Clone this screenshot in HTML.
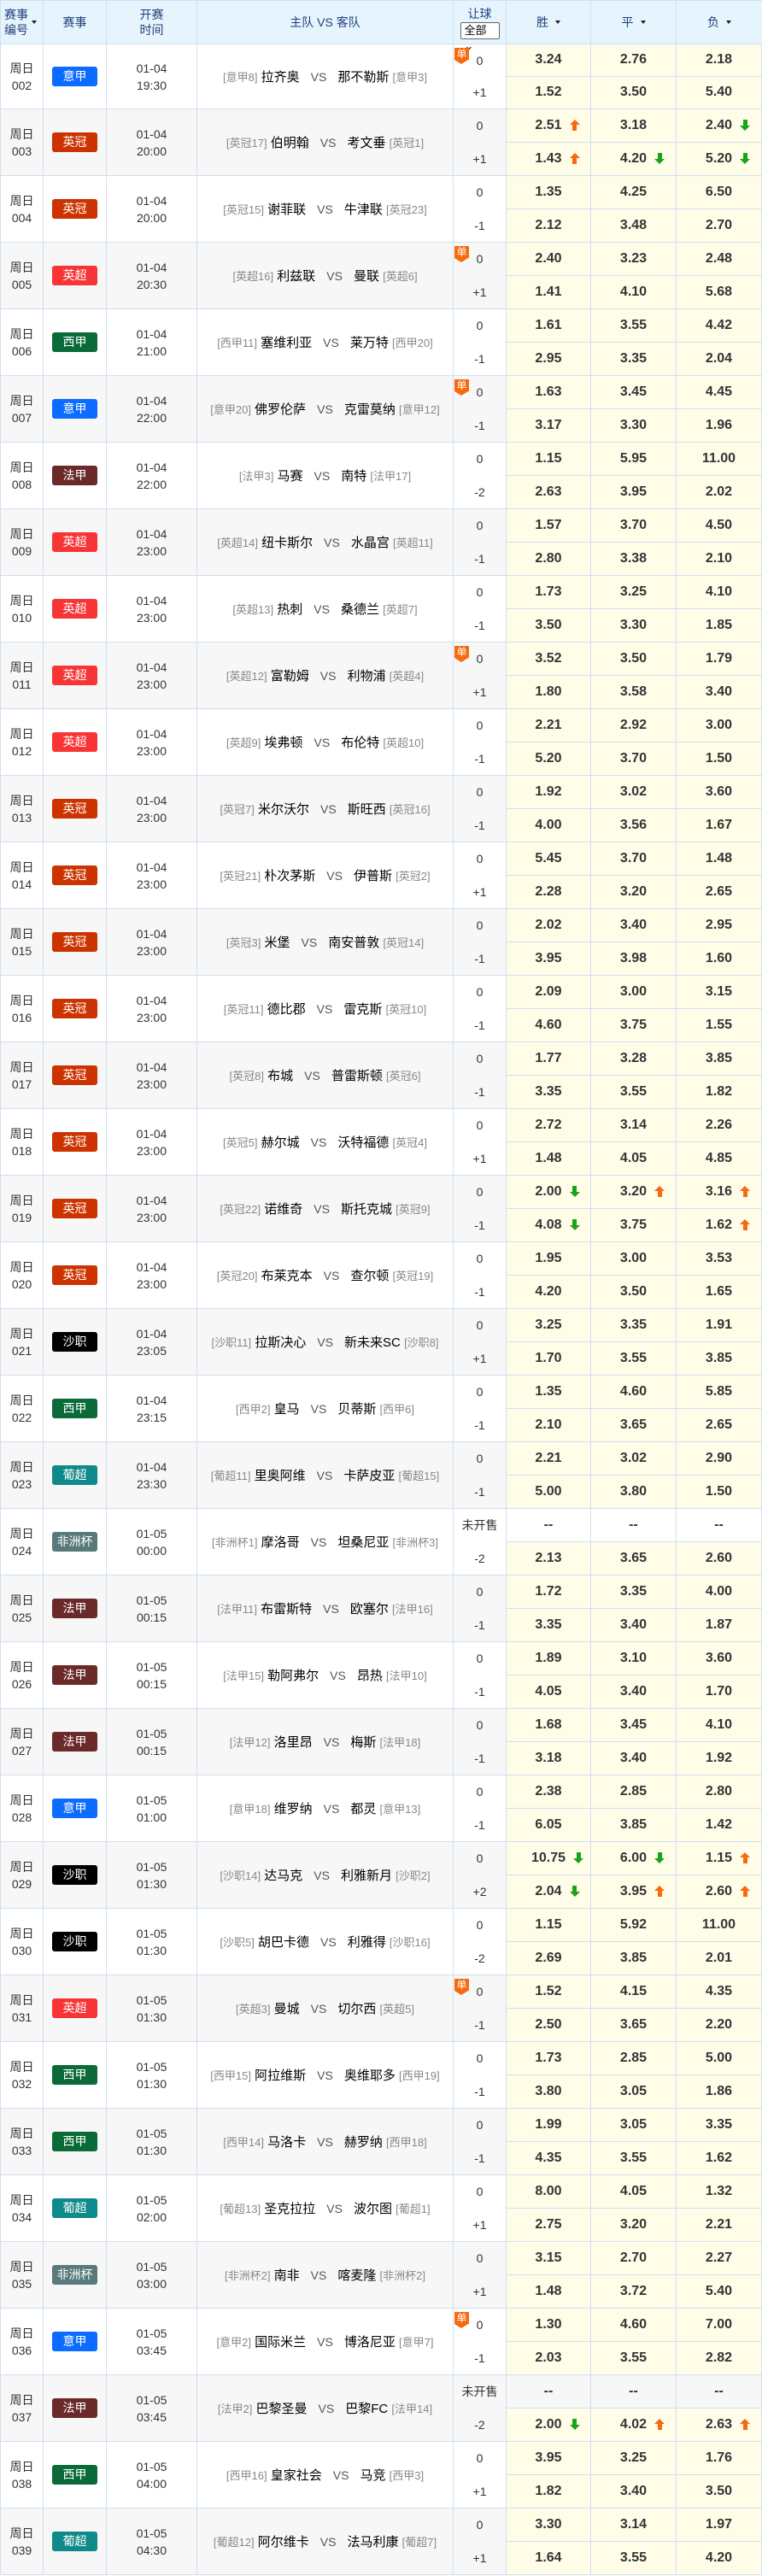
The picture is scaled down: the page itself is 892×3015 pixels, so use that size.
<!DOCTYPE html>
<html><head><meta charset="utf-8">
<style>
*{margin:0;padding:0;box-sizing:border-box}
body{width:892px;height:3015px;background:#fff;font-family:"Liberation Sans","Noto Sans CJK SC",sans-serif;color:#333;overflow:hidden}
.w{border-left:1px solid #cfe0f0;border-top:1px solid #cfe0f0;width:892px}
.hd,.m{display:flex;border-bottom:1px solid #cfe0f0}
.hd{height:51px;background:#e6f4fe;color:#1f3f78;font-size:14px}
.hd>div{border-right:1px solid #cfe0f0;display:flex;align-items:center;justify-content:center;text-align:center;line-height:18px;position:relative}
.car{display:inline-block;width:0;height:0;border-left:3.5px solid transparent;border-right:3.5px solid transparent;border-top:4px solid #222;margin-left:8px;vertical-align:middle}
.sel{display:inline-block;border:1px solid #666;border-radius:2px;background:#fff;color:#000;font-size:13px;width:46px;height:20px;line-height:18px;text-align:left;padding-left:4px;margin-top:1px}
.m{height:78px}
.m.f{height:76px}
.g{background:#f7f7f7}
.a,.b,.t,.v,.h{border-right:1px solid #cfe0f0;display:flex;align-items:center;justify-content:center;text-align:center}
.c1,.a{width:50px}.c2,.b{width:74px}.c3,.t{width:106px}.c4,.v{width:300px}.c5,.h{width:62px}
.co{width:100px}.co3{width:99px}
.a,.t{font-size:14px;line-height:20px;color:#333}
.b i{font-style:normal;display:block;width:53px;height:23px;line-height:23px;border-radius:3px;color:#fff;font-size:14px}
.yj{background:#0b6cff}.yg{background:#cc3300}.yc{background:#f83536}.xj{background:#0a6b38}.fj{background:#6b2a2a}.sz{background:#000}.fz{background:#587a7a}.pc{background:#0f8a8a}
.v{font-size:15px;color:#000;white-space:nowrap}
.v em{font-style:normal;color:#888;font-size:13px}
.v small{font-size:14px;color:#555;margin:0 13px}
.h{flex-direction:column;position:relative;font-size:14px;color:#333}
.h p{flex:1;display:flex;align-items:center;justify-content:center;width:100%}
.dan{position:absolute;left:1px;top:4px;width:17px;height:14px;background:#f86a0d;color:#fff;font-size:12px;line-height:14px;text-align:center}
.dan:after{content:"";position:absolute;left:0;top:14px;border-left:8.5px solid transparent;border-right:8.5px solid transparent;border-top:5px solid #f86a0d}
.o{width:299px;display:grid;grid-template-columns:99px 100px 100px;grid-template-rows:1fr 1fr}
.o p{background:#fffde8;border-right:1px solid #cfe0f0;display:flex;align-items:center;justify-content:center;font-weight:bold;font-size:16px;color:#333}
.o p:nth-child(-n+3){border-bottom:1px solid #cfe0f0}
.o p.n{background:transparent}
.o span{position:relative}
.u,.d{position:absolute;left:calc(100% + 9px);top:50%;width:12px;height:13px;margin-top:-7px}
.u:before,.d:before{content:"";position:absolute;left:0;border-left:6px solid transparent;border-right:6px solid transparent}
.u:after,.d:after{content:"";position:absolute;left:3.5px;width:5px;height:7px}
.u:before{top:0;border-bottom:6px solid #f86a0d}.u:after{top:6px;background:#f86a0d}
.d:before{bottom:0;border-top:6px solid #1aa31a}.d:after{top:0;background:#1aa31a}
</style></head><body><div class="w">
<div class="hd">
<div class="c1" style="justify-content:flex-start;padding-left:4px;text-align:left">赛事<br>编号<span class="car" style="margin-left:4px"></span></div>
<div class="c2">赛事</div>
<div class="c3">开赛<br>时间</div>
<div class="c4">主队 VS 客队</div>
<div class="c5" style="flex-direction:column">让球<span class="sel">全部 ⌄</span></div>
<div class="co3">胜<span class="car"></span></div>
<div class="co">平<span class="car"></span></div>
<div class="co" style="border-right:0">负<span class="car"></span></div>
</div>

<div class="m f"><div class="a">周日<br>002</div><div class="b"><i class="yj">意甲</i></div><div class="t">01-04<br>19:30</div><div class="v"><em>[意甲8]</em>&nbsp;拉齐奥<small>VS</small>那不勒斯&nbsp;<em>[意甲3]</em></div><div class="h"><span class="dan">单</span><p>0</p><p>+1</p></div><div class="o"><p><span>3.24</span></p><p><span>2.76</span></p><p><span>2.18</span></p><p><span>1.52</span></p><p><span>3.50</span></p><p><span>5.40</span></p></div></div>

<div class="m g"><div class="a">周日<br>003</div><div class="b"><i class="yg">英冠</i></div><div class="t">01-04<br>20:00</div><div class="v"><em>[英冠17]</em>&nbsp;伯明翰<small>VS</small>考文垂&nbsp;<em>[英冠1]</em></div><div class="h"><p>0</p><p>+1</p></div><div class="o"><p><span>2.51<b class="u"></b></span></p><p><span>3.18</span></p><p><span>2.40<b class="d"></b></span></p><p><span>1.43<b class="u"></b></span></p><p><span>4.20<b class="d"></b></span></p><p><span>5.20<b class="d"></b></span></p></div></div>

<div class="m"><div class="a">周日<br>004</div><div class="b"><i class="yg">英冠</i></div><div class="t">01-04<br>20:00</div><div class="v"><em>[英冠15]</em>&nbsp;谢菲联<small>VS</small>牛津联&nbsp;<em>[英冠23]</em></div><div class="h"><p>0</p><p>-1</p></div><div class="o"><p><span>1.35</span></p><p><span>4.25</span></p><p><span>6.50</span></p><p><span>2.12</span></p><p><span>3.48</span></p><p><span>2.70</span></p></div></div>

<div class="m g"><div class="a">周日<br>005</div><div class="b"><i class="yc">英超</i></div><div class="t">01-04<br>20:30</div><div class="v"><em>[英超16]</em>&nbsp;利兹联<small>VS</small>曼联&nbsp;<em>[英超6]</em></div><div class="h"><span class="dan">单</span><p>0</p><p>+1</p></div><div class="o"><p><span>2.40</span></p><p><span>3.23</span></p><p><span>2.48</span></p><p><span>1.41</span></p><p><span>4.10</span></p><p><span>5.68</span></p></div></div>

<div class="m"><div class="a">周日<br>006</div><div class="b"><i class="xj">西甲</i></div><div class="t">01-04<br>21:00</div><div class="v"><em>[西甲11]</em>&nbsp;塞维利亚<small>VS</small>莱万特&nbsp;<em>[西甲20]</em></div><div class="h"><p>0</p><p>-1</p></div><div class="o"><p><span>1.61</span></p><p><span>3.55</span></p><p><span>4.42</span></p><p><span>2.95</span></p><p><span>3.35</span></p><p><span>2.04</span></p></div></div>

<div class="m g"><div class="a">周日<br>007</div><div class="b"><i class="yj">意甲</i></div><div class="t">01-04<br>22:00</div><div class="v"><em>[意甲20]</em>&nbsp;佛罗伦萨<small>VS</small>克雷莫纳&nbsp;<em>[意甲12]</em></div><div class="h"><span class="dan">单</span><p>0</p><p>-1</p></div><div class="o"><p><span>1.63</span></p><p><span>3.45</span></p><p><span>4.45</span></p><p><span>3.17</span></p><p><span>3.30</span></p><p><span>1.96</span></p></div></div>

<div class="m"><div class="a">周日<br>008</div><div class="b"><i class="fj">法甲</i></div><div class="t">01-04<br>22:00</div><div class="v"><em>[法甲3]</em>&nbsp;马赛<small>VS</small>南特&nbsp;<em>[法甲17]</em></div><div class="h"><p>0</p><p>-2</p></div><div class="o"><p><span>1.15</span></p><p><span>5.95</span></p><p><span>11.00</span></p><p><span>2.63</span></p><p><span>3.95</span></p><p><span>2.02</span></p></div></div>

<div class="m g"><div class="a">周日<br>009</div><div class="b"><i class="yc">英超</i></div><div class="t">01-04<br>23:00</div><div class="v"><em>[英超14]</em>&nbsp;纽卡斯尔<small>VS</small>水晶宫&nbsp;<em>[英超11]</em></div><div class="h"><p>0</p><p>-1</p></div><div class="o"><p><span>1.57</span></p><p><span>3.70</span></p><p><span>4.50</span></p><p><span>2.80</span></p><p><span>3.38</span></p><p><span>2.10</span></p></div></div>

<div class="m"><div class="a">周日<br>010</div><div class="b"><i class="yc">英超</i></div><div class="t">01-04<br>23:00</div><div class="v"><em>[英超13]</em>&nbsp;热刺<small>VS</small>桑德兰&nbsp;<em>[英超7]</em></div><div class="h"><p>0</p><p>-1</p></div><div class="o"><p><span>1.73</span></p><p><span>3.25</span></p><p><span>4.10</span></p><p><span>3.50</span></p><p><span>3.30</span></p><p><span>1.85</span></p></div></div>

<div class="m g"><div class="a">周日<br>011</div><div class="b"><i class="yc">英超</i></div><div class="t">01-04<br>23:00</div><div class="v"><em>[英超12]</em>&nbsp;富勒姆<small>VS</small>利物浦&nbsp;<em>[英超4]</em></div><div class="h"><span class="dan">单</span><p>0</p><p>+1</p></div><div class="o"><p><span>3.52</span></p><p><span>3.50</span></p><p><span>1.79</span></p><p><span>1.80</span></p><p><span>3.58</span></p><p><span>3.40</span></p></div></div>

<div class="m"><div class="a">周日<br>012</div><div class="b"><i class="yc">英超</i></div><div class="t">01-04<br>23:00</div><div class="v"><em>[英超9]</em>&nbsp;埃弗顿<small>VS</small>布伦特&nbsp;<em>[英超10]</em></div><div class="h"><p>0</p><p>-1</p></div><div class="o"><p><span>2.21</span></p><p><span>2.92</span></p><p><span>3.00</span></p><p><span>5.20</span></p><p><span>3.70</span></p><p><span>1.50</span></p></div></div>

<div class="m g"><div class="a">周日<br>013</div><div class="b"><i class="yg">英冠</i></div><div class="t">01-04<br>23:00</div><div class="v"><em>[英冠7]</em>&nbsp;米尔沃尔<small>VS</small>斯旺西&nbsp;<em>[英冠16]</em></div><div class="h"><p>0</p><p>-1</p></div><div class="o"><p><span>1.92</span></p><p><span>3.02</span></p><p><span>3.60</span></p><p><span>4.00</span></p><p><span>3.56</span></p><p><span>1.67</span></p></div></div>

<div class="m"><div class="a">周日<br>014</div><div class="b"><i class="yg">英冠</i></div><div class="t">01-04<br>23:00</div><div class="v"><em>[英冠21]</em>&nbsp;朴次茅斯<small>VS</small>伊普斯&nbsp;<em>[英冠2]</em></div><div class="h"><p>0</p><p>+1</p></div><div class="o"><p><span>5.45</span></p><p><span>3.70</span></p><p><span>1.48</span></p><p><span>2.28</span></p><p><span>3.20</span></p><p><span>2.65</span></p></div></div>

<div class="m g"><div class="a">周日<br>015</div><div class="b"><i class="yg">英冠</i></div><div class="t">01-04<br>23:00</div><div class="v"><em>[英冠3]</em>&nbsp;米堡<small>VS</small>南安普敦&nbsp;<em>[英冠14]</em></div><div class="h"><p>0</p><p>-1</p></div><div class="o"><p><span>2.02</span></p><p><span>3.40</span></p><p><span>2.95</span></p><p><span>3.95</span></p><p><span>3.98</span></p><p><span>1.60</span></p></div></div>

<div class="m"><div class="a">周日<br>016</div><div class="b"><i class="yg">英冠</i></div><div class="t">01-04<br>23:00</div><div class="v"><em>[英冠11]</em>&nbsp;德比郡<small>VS</small>雷克斯&nbsp;<em>[英冠10]</em></div><div class="h"><p>0</p><p>-1</p></div><div class="o"><p><span>2.09</span></p><p><span>3.00</span></p><p><span>3.15</span></p><p><span>4.60</span></p><p><span>3.75</span></p><p><span>1.55</span></p></div></div>

<div class="m g"><div class="a">周日<br>017</div><div class="b"><i class="yg">英冠</i></div><div class="t">01-04<br>23:00</div><div class="v"><em>[英冠8]</em>&nbsp;布城<small>VS</small>普雷斯顿&nbsp;<em>[英冠6]</em></div><div class="h"><p>0</p><p>-1</p></div><div class="o"><p><span>1.77</span></p><p><span>3.28</span></p><p><span>3.85</span></p><p><span>3.35</span></p><p><span>3.55</span></p><p><span>1.82</span></p></div></div>

<div class="m"><div class="a">周日<br>018</div><div class="b"><i class="yg">英冠</i></div><div class="t">01-04<br>23:00</div><div class="v"><em>[英冠5]</em>&nbsp;赫尔城<small>VS</small>沃特福德&nbsp;<em>[英冠4]</em></div><div class="h"><p>0</p><p>+1</p></div><div class="o"><p><span>2.72</span></p><p><span>3.14</span></p><p><span>2.26</span></p><p><span>1.48</span></p><p><span>4.05</span></p><p><span>4.85</span></p></div></div>

<div class="m g"><div class="a">周日<br>019</div><div class="b"><i class="yg">英冠</i></div><div class="t">01-04<br>23:00</div><div class="v"><em>[英冠22]</em>&nbsp;诺维奇<small>VS</small>斯托克城&nbsp;<em>[英冠9]</em></div><div class="h"><p>0</p><p>-1</p></div><div class="o"><p><span>2.00<b class="d"></b></span></p><p><span>3.20<b class="u"></b></span></p><p><span>3.16<b class="u"></b></span></p><p><span>4.08<b class="d"></b></span></p><p><span>3.75</span></p><p><span>1.62<b class="u"></b></span></p></div></div>

<div class="m"><div class="a">周日<br>020</div><div class="b"><i class="yg">英冠</i></div><div class="t">01-04<br>23:00</div><div class="v"><em>[英冠20]</em>&nbsp;布莱克本<small>VS</small>查尔顿&nbsp;<em>[英冠19]</em></div><div class="h"><p>0</p><p>-1</p></div><div class="o"><p><span>1.95</span></p><p><span>3.00</span></p><p><span>3.53</span></p><p><span>4.20</span></p><p><span>3.50</span></p><p><span>1.65</span></p></div></div>

<div class="m g"><div class="a">周日<br>021</div><div class="b"><i class="sz">沙职</i></div><div class="t">01-04<br>23:05</div><div class="v"><em>[沙职11]</em>&nbsp;拉斯决心<small>VS</small>新未来SC&nbsp;<em>[沙职8]</em></div><div class="h"><p>0</p><p>+1</p></div><div class="o"><p><span>3.25</span></p><p><span>3.35</span></p><p><span>1.91</span></p><p><span>1.70</span></p><p><span>3.55</span></p><p><span>3.85</span></p></div></div>

<div class="m"><div class="a">周日<br>022</div><div class="b"><i class="xj">西甲</i></div><div class="t">01-04<br>23:15</div><div class="v"><em>[西甲2]</em>&nbsp;皇马<small>VS</small>贝蒂斯&nbsp;<em>[西甲6]</em></div><div class="h"><p>0</p><p>-1</p></div><div class="o"><p><span>1.35</span></p><p><span>4.60</span></p><p><span>5.85</span></p><p><span>2.10</span></p><p><span>3.65</span></p><p><span>2.65</span></p></div></div>

<div class="m g"><div class="a">周日<br>023</div><div class="b"><i class="pc">葡超</i></div><div class="t">01-04<br>23:30</div><div class="v"><em>[葡超11]</em>&nbsp;里奥阿维<small>VS</small>卡萨皮亚&nbsp;<em>[葡超15]</em></div><div class="h"><p>0</p><p>-1</p></div><div class="o"><p><span>2.21</span></p><p><span>3.02</span></p><p><span>2.90</span></p><p><span>5.00</span></p><p><span>3.80</span></p><p><span>1.50</span></p></div></div>

<div class="m"><div class="a">周日<br>024</div><div class="b"><i class="fz">非洲杯</i></div><div class="t">01-05<br>00:00</div><div class="v"><em>[非洲杯1]</em>&nbsp;摩洛哥<small>VS</small>坦桑尼亚&nbsp;<em>[非洲杯3]</em></div><div class="h"><p>未开售</p><p>-2</p></div><div class="o"><p class="n"><span>--</span></p><p class="n"><span>--</span></p><p class="n"><span>--</span></p><p><span>2.13</span></p><p><span>3.65</span></p><p><span>2.60</span></p></div></div>

<div class="m g"><div class="a">周日<br>025</div><div class="b"><i class="fj">法甲</i></div><div class="t">01-05<br>00:15</div><div class="v"><em>[法甲11]</em>&nbsp;布雷斯特<small>VS</small>欧塞尔&nbsp;<em>[法甲16]</em></div><div class="h"><p>0</p><p>-1</p></div><div class="o"><p><span>1.72</span></p><p><span>3.35</span></p><p><span>4.00</span></p><p><span>3.35</span></p><p><span>3.40</span></p><p><span>1.87</span></p></div></div>

<div class="m"><div class="a">周日<br>026</div><div class="b"><i class="fj">法甲</i></div><div class="t">01-05<br>00:15</div><div class="v"><em>[法甲15]</em>&nbsp;勒阿弗尔<small>VS</small>昂热&nbsp;<em>[法甲10]</em></div><div class="h"><p>0</p><p>-1</p></div><div class="o"><p><span>1.89</span></p><p><span>3.10</span></p><p><span>3.60</span></p><p><span>4.05</span></p><p><span>3.40</span></p><p><span>1.70</span></p></div></div>

<div class="m g"><div class="a">周日<br>027</div><div class="b"><i class="fj">法甲</i></div><div class="t">01-05<br>00:15</div><div class="v"><em>[法甲12]</em>&nbsp;洛里昂<small>VS</small>梅斯&nbsp;<em>[法甲18]</em></div><div class="h"><p>0</p><p>-1</p></div><div class="o"><p><span>1.68</span></p><p><span>3.45</span></p><p><span>4.10</span></p><p><span>3.18</span></p><p><span>3.40</span></p><p><span>1.92</span></p></div></div>

<div class="m"><div class="a">周日<br>028</div><div class="b"><i class="yj">意甲</i></div><div class="t">01-05<br>01:00</div><div class="v"><em>[意甲18]</em>&nbsp;维罗纳<small>VS</small>都灵&nbsp;<em>[意甲13]</em></div><div class="h"><p>0</p><p>-1</p></div><div class="o"><p><span>2.38</span></p><p><span>2.85</span></p><p><span>2.80</span></p><p><span>6.05</span></p><p><span>3.85</span></p><p><span>1.42</span></p></div></div>

<div class="m g"><div class="a">周日<br>029</div><div class="b"><i class="sz">沙职</i></div><div class="t">01-05<br>01:30</div><div class="v"><em>[沙职14]</em>&nbsp;达马克<small>VS</small>利雅新月&nbsp;<em>[沙职2]</em></div><div class="h"><p>0</p><p>+2</p></div><div class="o"><p><span>10.75<b class="d"></b></span></p><p><span>6.00<b class="d"></b></span></p><p><span>1.15<b class="u"></b></span></p><p><span>2.04<b class="d"></b></span></p><p><span>3.95<b class="u"></b></span></p><p><span>2.60<b class="u"></b></span></p></div></div>

<div class="m"><div class="a">周日<br>030</div><div class="b"><i class="sz">沙职</i></div><div class="t">01-05<br>01:30</div><div class="v"><em>[沙职5]</em>&nbsp;胡巴卡德<small>VS</small>利雅得&nbsp;<em>[沙职16]</em></div><div class="h"><p>0</p><p>-2</p></div><div class="o"><p><span>1.15</span></p><p><span>5.92</span></p><p><span>11.00</span></p><p><span>2.69</span></p><p><span>3.85</span></p><p><span>2.01</span></p></div></div>

<div class="m g"><div class="a">周日<br>031</div><div class="b"><i class="yc">英超</i></div><div class="t">01-05<br>01:30</div><div class="v"><em>[英超3]</em>&nbsp;曼城<small>VS</small>切尔西&nbsp;<em>[英超5]</em></div><div class="h"><span class="dan">单</span><p>0</p><p>-1</p></div><div class="o"><p><span>1.52</span></p><p><span>4.15</span></p><p><span>4.35</span></p><p><span>2.50</span></p><p><span>3.65</span></p><p><span>2.20</span></p></div></div>

<div class="m"><div class="a">周日<br>032</div><div class="b"><i class="xj">西甲</i></div><div class="t">01-05<br>01:30</div><div class="v"><em>[西甲15]</em>&nbsp;阿拉维斯<small>VS</small>奥维耶多&nbsp;<em>[西甲19]</em></div><div class="h"><p>0</p><p>-1</p></div><div class="o"><p><span>1.73</span></p><p><span>2.85</span></p><p><span>5.00</span></p><p><span>3.80</span></p><p><span>3.05</span></p><p><span>1.86</span></p></div></div>

<div class="m g"><div class="a">周日<br>033</div><div class="b"><i class="xj">西甲</i></div><div class="t">01-05<br>01:30</div><div class="v"><em>[西甲14]</em>&nbsp;马洛卡<small>VS</small>赫罗纳&nbsp;<em>[西甲18]</em></div><div class="h"><p>0</p><p>-1</p></div><div class="o"><p><span>1.99</span></p><p><span>3.05</span></p><p><span>3.35</span></p><p><span>4.35</span></p><p><span>3.55</span></p><p><span>1.62</span></p></div></div>

<div class="m"><div class="a">周日<br>034</div><div class="b"><i class="pc">葡超</i></div><div class="t">01-05<br>02:00</div><div class="v"><em>[葡超13]</em>&nbsp;圣克拉拉<small>VS</small>波尔图&nbsp;<em>[葡超1]</em></div><div class="h"><p>0</p><p>+1</p></div><div class="o"><p><span>8.00</span></p><p><span>4.05</span></p><p><span>1.32</span></p><p><span>2.75</span></p><p><span>3.20</span></p><p><span>2.21</span></p></div></div>

<div class="m g"><div class="a">周日<br>035</div><div class="b"><i class="fz">非洲杯</i></div><div class="t">01-05<br>03:00</div><div class="v"><em>[非洲杯2]</em>&nbsp;南非<small>VS</small>喀麦隆&nbsp;<em>[非洲杯2]</em></div><div class="h"><p>0</p><p>+1</p></div><div class="o"><p><span>3.15</span></p><p><span>2.70</span></p><p><span>2.27</span></p><p><span>1.48</span></p><p><span>3.72</span></p><p><span>5.40</span></p></div></div>

<div class="m"><div class="a">周日<br>036</div><div class="b"><i class="yj">意甲</i></div><div class="t">01-05<br>03:45</div><div class="v"><em>[意甲2]</em>&nbsp;国际米兰<small>VS</small>博洛尼亚&nbsp;<em>[意甲7]</em></div><div class="h"><span class="dan">单</span><p>0</p><p>-1</p></div><div class="o"><p><span>1.30</span></p><p><span>4.60</span></p><p><span>7.00</span></p><p><span>2.03</span></p><p><span>3.55</span></p><p><span>2.82</span></p></div></div>

<div class="m g"><div class="a">周日<br>037</div><div class="b"><i class="fj">法甲</i></div><div class="t">01-05<br>03:45</div><div class="v"><em>[法甲2]</em>&nbsp;巴黎圣曼<small>VS</small>巴黎FC&nbsp;<em>[法甲14]</em></div><div class="h"><p>未开售</p><p>-2</p></div><div class="o"><p class="n"><span>--</span></p><p class="n"><span>--</span></p><p class="n"><span>--</span></p><p><span>2.00<b class="d"></b></span></p><p><span>4.02<b class="u"></b></span></p><p><span>2.63<b class="u"></b></span></p></div></div>

<div class="m"><div class="a">周日<br>038</div><div class="b"><i class="xj">西甲</i></div><div class="t">01-05<br>04:00</div><div class="v"><em>[西甲16]</em>&nbsp;皇家社会<small>VS</small>马竞&nbsp;<em>[西甲3]</em></div><div class="h"><p>0</p><p>+1</p></div><div class="o"><p><span>3.95</span></p><p><span>3.25</span></p><p><span>1.76</span></p><p><span>1.82</span></p><p><span>3.40</span></p><p><span>3.50</span></p></div></div>

<div class="m g"><div class="a">周日<br>039</div><div class="b"><i class="pc">葡超</i></div><div class="t">01-05<br>04:30</div><div class="v"><em>[葡超12]</em>&nbsp;阿尔维卡<small>VS</small>法马利康&nbsp;<em>[葡超7]</em></div><div class="h"><p>0</p><p>+1</p></div><div class="o"><p><span>3.30</span></p><p><span>3.14</span></p><p><span>1.97</span></p><p><span>1.64</span></p><p><span>3.55</span></p><p><span>4.20</span></p></div></div>

</div></body></html>
